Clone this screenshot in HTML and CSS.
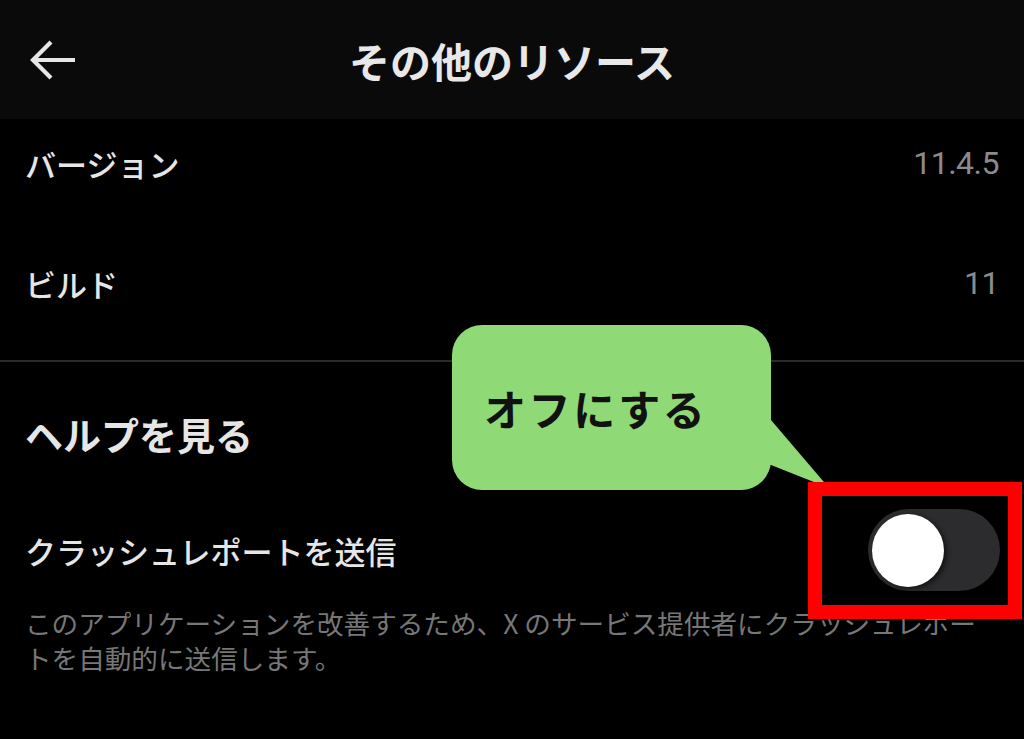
FILE: index.html
```html
<!DOCTYPE html>
<html lang="ja">
<head>
<meta charset="utf-8">
<link rel="stylesheet" href="styles.css">
</head>
<body>
<div class="page">
  <header class="topbar">
    <svg class="back" viewBox="0 0 48 44" width="48" height="44">
      <path d="M46 22 H5 M22 4 L4 22 L22 40" fill="none" stroke="#e6e6e6" stroke-width="4.2" stroke-linecap="butt" stroke-linejoin="miter"/>
    </svg>
    <h1 class="title">その他のリソース</h1>
  </header>

  <section class="info">
    <div class="row"><span class="label">バージョン</span><span class="value">11.4.5</span></div>
    <div class="row"><span class="label">ビルド</span><span class="value">11</span></div>
  </section>

  <div class="divider"></div>

  <section class="help">
    <h2 class="heading">ヘルプを見る</h2>
    <div class="toggle-row">
      <span class="label medium">クラッシュレポートを送信</span>
      <div class="switch"><div class="knob"></div></div>
    </div>
    <p class="desc"><span class="line">このアプリケーションを改善するため、X のサービス提供者にクラッシュレポー</span><span class="line">トを自動的に送信します。</span></p>
  </section>

  <div class="callout">
    <span class="callout-text">オフにする</span>
    <svg class="tail" viewBox="0 0 62 70" width="62" height="70">
      <polygon points="-3,0 0,0 58,68 0,45 -3,45" fill="#8fd976"/>
    </svg>
  </div>
  <div class="highlight"></div>
</div>
</body>
</html>
```

FILE: styles.css
```css
* { box-sizing: border-box; margin: 0; padding: 0; }
html, body { background: #000; }
body {
  width: 1024px;
  height: 739px;
  overflow: hidden;
  font-family: "Noto Sans CJK JP", "Noto Sans", sans-serif;
  color: #e6e6e6;
}
.page { position: relative; width: 1024px; height: 739px; }

.topbar {
  height: 119px;
  background: #0a0a0a;
  display: flex;
  align-items: center;
  justify-content: center;
  position: relative;
}
.back { position: absolute; left: 29px; top: 38px; }
.title {
  font-size: 41px;
  font-weight: 700;
  color: #e8e8e8;
  line-height: 1;
  margin-top: 2px;
}

.info {
  display: flex;
  flex-direction: column;
  gap: 32px;
  padding: 0 25px;
}
.row {
  height: 88px;
  display: flex;
  align-items: center;
  justify-content: space-between;
}
.label {
  font-size: 31px;
  font-weight: 500;
  color: #e6e6e6;
  line-height: 1;
}
.value {
  font-family: Roboto, "Noto Sans", sans-serif;
  font-size: 32px;
  font-weight: 400;
  color: #8b8b8b;
  line-height: 1;
  letter-spacing: -0.5px;
}

.divider {
  margin-top: 33px;
  height: 2px;
  background: #2a2a2a;
}

.help { padding: 0 24px 0 25px; }
.heading {
  margin-top: 47px;
  font-size: 38px;
  font-weight: 700;
  line-height: 50px;
  color: #e6e6e6;
}
.toggle-row {
  margin-top: 50px;
  height: 82px;
  display: flex;
  align-items: center;
  justify-content: space-between;
}
.switch {
  width: 132px;
  height: 82px;
  border-radius: 41px;
  background: #2c2c2e;
  padding: 5px 4px;
}
.knob {
  width: 72px;
  height: 73px;
  border-radius: 50%;
  background: #fff;
  box-shadow: 3px 2px 5px rgba(0,0,0,0.55);
}
.desc {
  margin-top: 14px;
  font-size: 26.6px;
  color: #777;
  white-space: nowrap;
  display: flex;
  flex-direction: column;
}
.line {
  display: block;
  height: 35px;
  line-height: 35px;
}

.callout {
  position: absolute;
  left: 452px;
  top: 325px;
  width: 319px;
  height: 165px;
  background: #8fd976;
  border-radius: 30px;
  display: flex;
  align-items: center;
  padding-left: 32px;
}
.callout-text {
  font-size: 42px;
  font-weight: 700;
  color: #111;
  letter-spacing: 2.6px;
  line-height: 1;
}
.tail {
  position: absolute;
  left: 100%;
  top: 95px;
  overflow: visible;
}
.highlight {
  position: absolute;
  left: 808px;
  top: 482px;
  width: 214px;
  height: 137px;
  border: 14px solid #ff0000;
}
```
